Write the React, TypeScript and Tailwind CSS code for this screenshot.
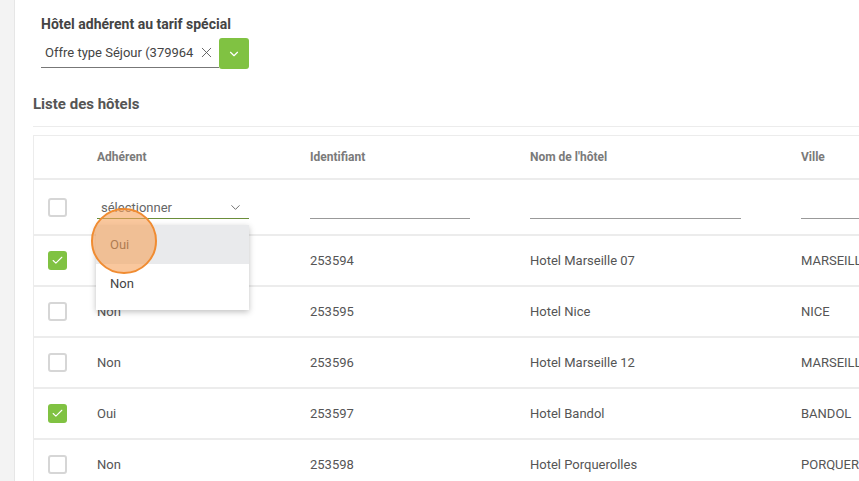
import { ChevronDown, X, Check } from "lucide-react";

type Hotel = {
  adherent: boolean;
  id: string;
  name: string;
  city: string;
};

const hotels: Hotel[] = [
  { adherent: true, id: "253594", name: "Hotel Marseille 07", city: "MARSEILLE" },
  { adherent: false, id: "253595", name: "Hotel Nice", city: "NICE" },
  { adherent: false, id: "253596", name: "Hotel Marseille 12", city: "MARSEILLE" },
  { adherent: true, id: "253597", name: "Hotel Bandol", city: "BANDOL" },
  { adherent: false, id: "253598", name: "Hotel Porquerolles", city: "PORQUEROLLES" },
];

const cols = "grid grid-cols-[63px_213px_220px_271px_1fr]";

const Checkbox = ({ checked }: { checked?: boolean }) =>
  checked ? (
    <span className="flex h-[19px] w-[19px] items-center justify-center rounded-[3px] bg-[#80c242]">
      <Check className="h-[13px] w-[13px] text-white" strokeWidth={2} />
    </span>
  ) : (
    <span className="block h-[19px] w-[19px] rounded-[3px] border-2 border-[#d6d6d6] bg-white" />
  );

const App = () => {
  return (
    <div className="flex h-[481px] w-[859px] overflow-hidden bg-white font-['Roboto',sans-serif] text-[#555]">
      {/* Side rail */}
      <div className="w-[15px] shrink-0 border-r border-[#e6e6e6] bg-[#f3f3f3]" />

      <main className="min-w-0 flex-1 pl-[18px]">
        {/* Special rate filter */}
        <section className="pl-[8px] pt-[15px]">
          <h2 className="text-[14px] font-bold leading-[18px] text-[#444]">
            Hôtel adhérent au tarif spécial
          </h2>
          <div className="mt-[5px] flex items-stretch">
            <div className="flex h-[30px] w-[178px] items-center justify-between border-b border-[#777] pl-[4px] pr-[4px]">
              <span className="text-[13px] text-[#444]">Offre type Séjour (379964</span>
              <X className="h-[17px] w-[17px] text-[#555]" strokeWidth={1.25} />
            </div>
            <button className="flex h-[31px] w-[30px] items-center justify-center rounded-[3px] bg-[#80c242]">
              <ChevronDown className="h-[14px] w-[14px] text-white" strokeWidth={2} />
            </button>
          </div>
        </section>

        <h1 className="mt-[25px] text-[15px] font-bold leading-[20px] text-[#555]">Liste des hôtels</h1>
        <div className="mt-[12px] h-px w-[900px] bg-[#ececec]" />

        {/* Hotel table */}
        <div className="relative mt-[8px] w-[900px] border-l border-t border-[#ececec]">
          <div className={`${cols} h-[44px] items-center border-b-2 border-[#ececec] text-[12px] font-bold text-[#7a7a7a]`}>
            <span />
            <span>Adhérent</span>
            <span>Identifiant</span>
            <span>Nom de l'hôtel</span>
            <span>Ville</span>
          </div>

          {/* Filter row */}
          <div className={`${cols} h-[56px] border-b-2 border-[#ececec]`}>
            <div className="flex items-center pl-[14px]">
              <Checkbox />
            </div>
            <div className="relative">
              <div className="mt-[17px] flex h-[22px] w-[152px] items-center justify-between border-b border-[#6b8e3a] pl-[4px] pr-[6px]">
                <span className="text-[13px] text-[#666]">sélectionner</span>
                <ChevronDown className="h-[15px] w-[15px] text-[#666]" strokeWidth={1.5} />
              </div>
              <ul className="absolute left-[-1px] top-[45px] z-10 w-[153px] bg-white pb-[7px] text-[13px] text-[#444] shadow-[0_2px_6px_rgba(0,0,0,0.25)]">
                <li className="flex h-[39px] items-center bg-[#e9eaec] pl-[14px]">Oui</li>
                <li className="flex h-[39px] items-center pl-[14px]">Non</li>
              </ul>
              <span className="absolute left-[-6px] top-[28px] z-20 h-[66px] w-[66px] rounded-full border-2 border-[#f08c32] bg-[#f5a15c]/60" />
            </div>
            <div>
              <div className="mt-[38px] h-px w-[160px] bg-[#999]" />
            </div>
            <div>
              <div className="mt-[38px] h-px w-[211px] bg-[#999]" />
            </div>
            <div>
              <div className="mt-[38px] h-px w-full bg-[#999]" />
            </div>
          </div>

          {hotels.map((hotel) => (
            <div
              key={hotel.id}
              className={`${cols} h-[51px] items-center border-b-2 border-[#ececec] text-[13px] text-[#555]`}
            >
              <div className="flex items-center pl-[14px]">
                <Checkbox checked={hotel.adherent} />
              </div>
              <span>{hotel.adherent ? "Oui" : "Non"}</span>
              <span>{hotel.id}</span>
              <span>{hotel.name}</span>
              <span>{hotel.city}</span>
            </div>
          ))}
        </div>
      </main>
    </div>
  );
};

export default App;
